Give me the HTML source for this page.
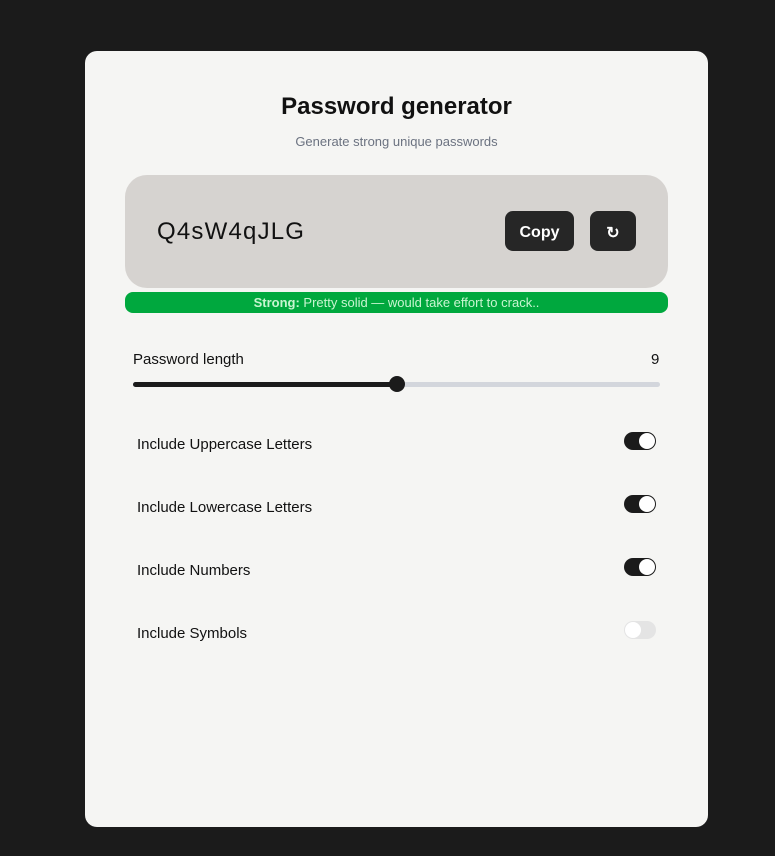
<!DOCTYPE html>
<html><head><meta charset="utf-8"><style>
*{box-sizing:border-box;margin:0;padding:0}
body{width:775px;height:856px;background:#1b1b1b;font-family:"Liberation Sans",sans-serif;position:relative;overflow:hidden}
.card{position:absolute;left:85px;top:51px;width:623px;height:776px;background:#f5f5f3;border-radius:12px}
h1{position:absolute;left:0;width:100%;top:42px;text-align:center;font-size:24px;font-weight:bold;color:#111}
.sub{position:absolute;left:0;width:100%top:83px;width:100%;top:83px;text-align:center;font-size:13px;color:#6b7280}
.box{position:absolute;left:40px;top:124px;width:543px;height:113px;background:#d6d3d0;border-radius:22px}
.pw{position:absolute;left:32px;top:43px;font-size:24px;letter-spacing:1.2px;color:#111}
.btn{position:absolute;top:36px;height:40px;background:#262626;border-radius:8px;color:#fff;font-weight:bold;font-size:16px;display:flex;align-items:center;justify-content:center;padding-top:3px}
.bar{position:absolute;left:40px;top:241px;width:543px;height:21px;background:#00a83e;border-radius:8px;color:#c8f5d0;font-size:13px;text-align:center;line-height:21px}
.lbl{position:absolute;font-size:15px;color:#111}
.track{position:absolute;left:48px;top:331px;width:527px;height:5px;background:#d3d6dc;border-radius:3px}
.fill{position:absolute;left:0;top:0;width:264px;height:5px;background:#1b1b1b;border-radius:3px}
.thumb{position:absolute;left:256px;top:-6px;width:16px;height:16px;border-radius:50%;background:#1b1b1b}
.tg{position:absolute;left:539px;width:32px;height:18px;border-radius:9px;background:#1b1b1b}
.tg::after{content:"";position:absolute;right:1px;top:1px;width:16px;height:16px;border-radius:50%;background:#fff}
.tg.off{background:#e4e4e4}
.tg.off::after{left:1px;right:auto}
</style></head><body>
<div class="card">
<h1>Password generator</h1>
<div class="sub">Generate strong unique passwords</div>
<div class="box">
<div class="pw">Q4sW4qJLG</div>
<div class="btn" style="left:380px;width:69px">Copy</div>
<div class="btn" style="left:465px;width:46px">↻</div>
</div>
<div class="bar"><b>Strong:</b> Pretty solid — would take effort to crack..</div>
<div class="lbl" style="left:48px;top:300px">Password length</div>
<div class="lbl" style="left:566px;top:300px">9</div>
<div class="track"><div class="fill"></div><div class="thumb"></div></div>
<div class="lbl" style="left:52px;top:385px">Include Uppercase Letters</div><div class="tg" style="top:381px"></div>
<div class="lbl" style="left:52px;top:448px">Include Lowercase Letters</div><div class="tg" style="top:444px"></div>
<div class="lbl" style="left:52px;top:511px">Include Numbers</div><div class="tg" style="top:507px"></div>
<div class="lbl" style="left:52px;top:574px">Include Symbols</div><div class="tg off" style="top:570px"></div>
</div>
</body></html>
